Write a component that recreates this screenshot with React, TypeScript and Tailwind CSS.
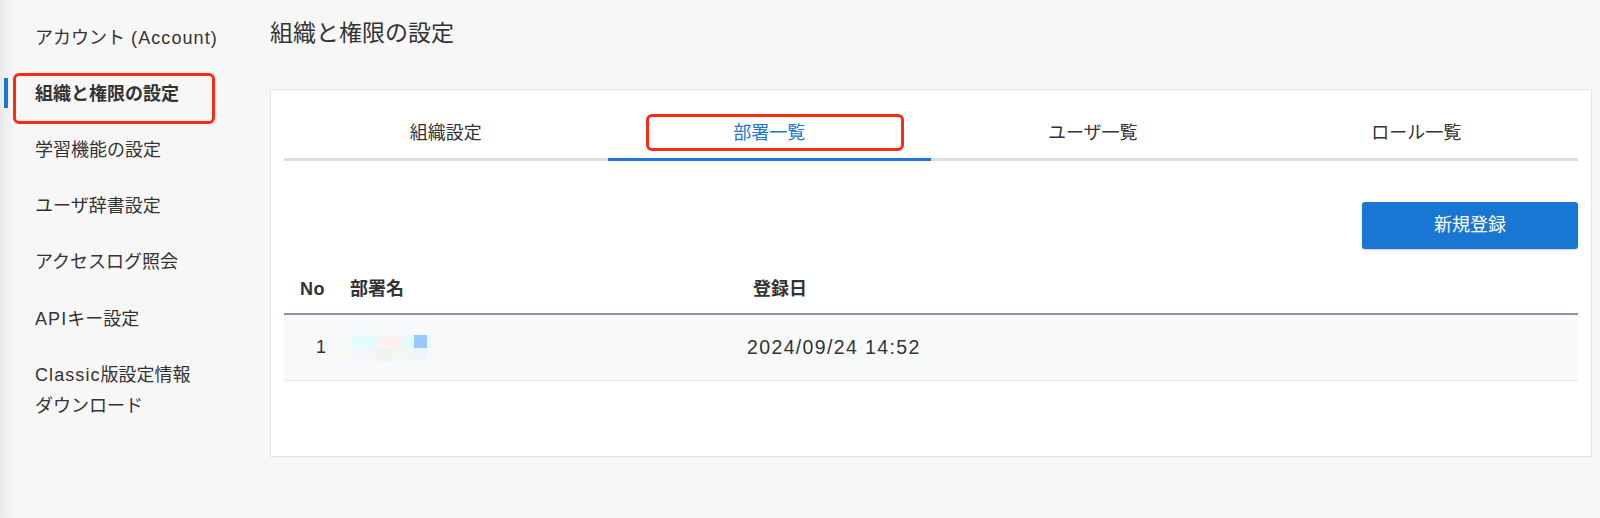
import React from 'react';

// [text, isLatin] runs per line; Latin runs get a little extra tracking
type Run = [string, boolean];

const menuItems: Run[][][] = [
  [[['アカウント', false], [' (Account)', true]]],
  [[['組織と権限の設定', false]]],
  [[['学習機能の設定', false]]],
  [[['ユーザ辞書設定', false]]],
  [[['アクセスログ照会', false]]],
  [[['API', true], ['キー設定', false]]],
  [[['Classic', true], ['版設定情報', false]], [['ダウンロード', false]]],
];

const tabs = ['組織設定', '部署一覧', 'ユーザ一覧', 'ロール一覧'];

// pixelated placeholder for the masked department name
const blurRow1 = [
  'w-[14px] bg-[#f6fafa]',
  'w-[26px] bg-[#e4fbff]',
  'w-[25px] bg-[#fff0f2]',
  'w-[12px] bg-[#e2fdff]',
  'w-[13px] bg-[#99c8fb]',
  'w-[5px] bg-[#f0f9ff]',
];
const blurRow2 = [
  'w-[15px] bg-[#faf8f2]',
  'w-[12px] bg-[#f8f6fd]',
  'w-[13px] bg-[#f8f5f8]',
  'w-[15px] bg-[#eef4ee]',
  'w-[22px] bg-[#f4f8f2]',
  'w-[13px] bg-[#ebf7fd]',
];

const Sidebar: React.FC = () => (
  <aside className="relative w-[265px] shrink-0 pt-[10px]">
    <div className="absolute inset-y-0 left-0 w-[14px] bg-gradient-to-r from-[#e9e9e9] to-[#f7f7f7]" />
    <ul className="relative">
      {menuItems.map((lines, i) => {
        const active = i === 1;
        return (
          <li key={i} className="relative py-[12.6px] pl-[35px] leading-[31px] text-[18px] text-[#333]">
            {active && (
              <>
                <span className="absolute left-[4px] top-[12px] h-[30px] w-[4px] bg-[#1976d2]" />
                <span className="absolute left-[13px] top-[7px] h-[51px] w-[202px] rounded-[6px] border-[3px] border-[#ff2a12]" />
              </>
            )}
            <span className={active ? 'font-bold' : ''}>
              {lines.map((runs, li) => (
                <span key={li} className="block whitespace-pre">
                  {runs.map(([text, latin]) => (
                    <span key={text} className={latin ? 'tracking-[0.06em]' : ''}>
                      {text}
                    </span>
                  ))}
                </span>
              ))}
            </span>
          </li>
        );
      })}
    </ul>
  </aside>
);

const Tabs: React.FC = () => (
  <div className="flex border-b-[3px] border-[#e0e0e0]">
    {tabs.map((tab, i) => {
      const active = i === 1;
      return (
        <div
          key={tab}
          className={
            'relative flex flex-1 items-center justify-center pt-[12px] pb-[12px] text-[18px] leading-[26px] ' +
            (active ? '-mb-[3px] border-b-[3px] border-[#1976d2] text-[#1976d2]' : 'text-[#333]')
          }
        >
          {active && (
            <span className="absolute left-[38px] top-[6px] h-[37px] w-[258px] rounded-[6px] border-[3px] border-[#ff2a12]" />
          )}
          {tab}
        </div>
      );
    })}
  </div>
);

const DepartmentTable: React.FC = () => (
  <div className="mt-[41px]">
    <div className="flex justify-end">
      <button className="h-[47px] w-[216px] rounded-[3px] bg-[#1976d2] text-[18px] text-white shadow-[0_1px_2px_rgba(0,0,0,0.2)]">
        新規登録
      </button>
    </div>
    <div className="mt-[16px] grid h-[50px] grid-cols-[66px_397px_1fr] items-center border-b-2 border-[#8b94a5] text-[18px] font-bold text-[#333]">
      <div className="pr-[25px] text-right tracking-[0.03em]">No</div>
      <div>部署名</div>
      <div className="pl-[6px]">登録日</div>
    </div>
    <div className="grid h-[66px] grid-cols-[66px_397px_1fr] items-center border-b border-[#ebebeb] bg-[#f8f9fb] text-[18px] text-[#333]">
      <div className="pr-[24px] text-right">1</div>
      <div className="flex flex-col blur-[0.6px]">
        <div className="-ml-[13px] flex h-[13px]">
          {blurRow1.map((c) => (
            <span key={c} className={'h-full ' + c} />
          ))}
        </div>
        <div className="-ml-[13px] flex h-[13px]">
          {blurRow2.map((c) => (
            <span key={c} className={'h-full ' + c} />
          ))}
        </div>
      </div>
      <div className="text-[19.5px] tracking-[0.07em]">2024/09/24 14:52</div>
    </div>
  </div>
);

export default function App() {
  return (
    <div
      className="flex h-[518px] w-full bg-[#f7f7f7]"
      style={{ fontFamily: '"Liberation Sans", "Noto Sans CJK JP", sans-serif' }}
    >
      <Sidebar />
      <main className="flex-1 pl-[5px] pr-[8px]">
        <h1 className="pt-[17px] text-[23px] leading-[32px] text-[#333]">組織と権限の設定</h1>
        <section className="mt-[40px] h-[368px] border border-[#e6e6e6] bg-white px-[13px] pt-[18px]">
          <Tabs />
          <DepartmentTable />
        </section>
      </main>
    </div>
  );
}
